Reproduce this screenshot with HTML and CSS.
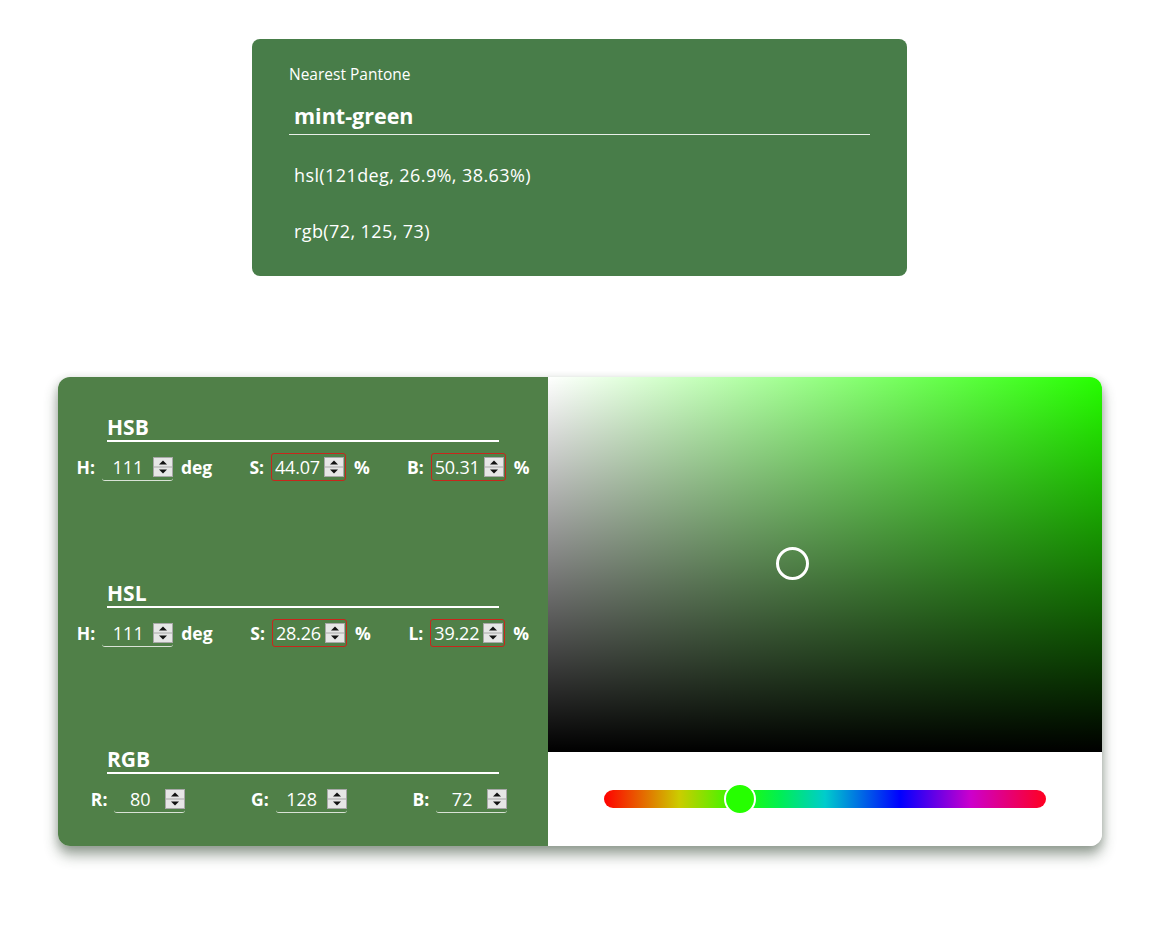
FILE: index.html
```html
<!DOCTYPE html>
<html lang="en">
<head>
<meta charset="utf-8">
<title>Color picker</title>
<link rel="stylesheet" href="styles.css">
</head>
<body>
<main class="page">
  <section class="pantone">
    <div class="pantone-label">Nearest Pantone</div>
    <div class="pantone-name">mint-green</div>
    <p class="pantone-value">hsl(121deg, 26.9%, 38.63%)</p>
    <p class="pantone-value rgbv">rgb(72, 125, 73)</p>
  </section>

  <section class="picker">
    <div class="controls">
      <div class="group">
        <h2 class="group-title">HSB</h2>
        <div class="row">
          <label class="field"><span class="lbl">H:</span><span class="num"><input class="val" type="text" value="111"><span class="spin"><svg viewBox="0 0 20 20" width="20" height="20"><rect x="0.5" y="0.5" width="19" height="19" fill="#e6e6e6" stroke="#a8a8a8"/><line x1="1" y1="10" x2="19" y2="10" stroke="#a8a8a8"/><path d="M6 7.5 L10 3.5 L14 7.5 Z" fill="#111"/><path d="M6 12.5 L10 16.5 L14 12.5 Z" fill="#111"/></svg></span></span><span class="unit">deg</span></label>
          <label class="field"><span class="lbl">S:</span><span class="num bad"><input class="val" type="text" value="44.07"><span class="spin"><svg viewBox="0 0 20 20" width="20" height="20"><rect x="0.5" y="0.5" width="19" height="19" fill="#e6e6e6" stroke="#a8a8a8"/><line x1="1" y1="10" x2="19" y2="10" stroke="#a8a8a8"/><path d="M6 7.5 L10 3.5 L14 7.5 Z" fill="#111"/><path d="M6 12.5 L10 16.5 L14 12.5 Z" fill="#111"/></svg></span></span><span class="unit">%</span></label>
          <label class="field"><span class="lbl">B:</span><span class="num bad"><input class="val" type="text" value="50.31"><span class="spin"><svg viewBox="0 0 20 20" width="20" height="20"><rect x="0.5" y="0.5" width="19" height="19" fill="#e6e6e6" stroke="#a8a8a8"/><line x1="1" y1="10" x2="19" y2="10" stroke="#a8a8a8"/><path d="M6 7.5 L10 3.5 L14 7.5 Z" fill="#111"/><path d="M6 12.5 L10 16.5 L14 12.5 Z" fill="#111"/></svg></span></span><span class="unit">%</span></label>
        </div>
      </div>
      <div class="group">
        <h2 class="group-title">HSL</h2>
        <div class="row">
          <label class="field"><span class="lbl">H:</span><span class="num"><input class="val" type="text" value="111"><span class="spin"><svg viewBox="0 0 20 20" width="20" height="20"><rect x="0.5" y="0.5" width="19" height="19" fill="#e6e6e6" stroke="#a8a8a8"/><line x1="1" y1="10" x2="19" y2="10" stroke="#a8a8a8"/><path d="M6 7.5 L10 3.5 L14 7.5 Z" fill="#111"/><path d="M6 12.5 L10 16.5 L14 12.5 Z" fill="#111"/></svg></span></span><span class="unit">deg</span></label>
          <label class="field"><span class="lbl">S:</span><span class="num bad"><input class="val" type="text" value="28.26"><span class="spin"><svg viewBox="0 0 20 20" width="20" height="20"><rect x="0.5" y="0.5" width="19" height="19" fill="#e6e6e6" stroke="#a8a8a8"/><line x1="1" y1="10" x2="19" y2="10" stroke="#a8a8a8"/><path d="M6 7.5 L10 3.5 L14 7.5 Z" fill="#111"/><path d="M6 12.5 L10 16.5 L14 12.5 Z" fill="#111"/></svg></span></span><span class="unit">%</span></label>
          <label class="field"><span class="lbl">L:</span><span class="num bad"><input class="val" type="text" value="39.22"><span class="spin"><svg viewBox="0 0 20 20" width="20" height="20"><rect x="0.5" y="0.5" width="19" height="19" fill="#e6e6e6" stroke="#a8a8a8"/><line x1="1" y1="10" x2="19" y2="10" stroke="#a8a8a8"/><path d="M6 7.5 L10 3.5 L14 7.5 Z" fill="#111"/><path d="M6 12.5 L10 16.5 L14 12.5 Z" fill="#111"/></svg></span></span><span class="unit">%</span></label>
        </div>
      </div>
      <div class="group">
        <h2 class="group-title">RGB</h2>
        <div class="row row-rgb">
          <label class="field"><span class="lbl">R:</span><span class="num"><input class="val" type="text" value="80"><span class="spin"><svg viewBox="0 0 20 20" width="20" height="20"><rect x="0.5" y="0.5" width="19" height="19" fill="#e6e6e6" stroke="#a8a8a8"/><line x1="1" y1="10" x2="19" y2="10" stroke="#a8a8a8"/><path d="M6 7.5 L10 3.5 L14 7.5 Z" fill="#111"/><path d="M6 12.5 L10 16.5 L14 12.5 Z" fill="#111"/></svg></span></span></label>
          <label class="field"><span class="lbl">G:</span><span class="num"><input class="val" type="text" value="128"><span class="spin"><svg viewBox="0 0 20 20" width="20" height="20"><rect x="0.5" y="0.5" width="19" height="19" fill="#e6e6e6" stroke="#a8a8a8"/><line x1="1" y1="10" x2="19" y2="10" stroke="#a8a8a8"/><path d="M6 7.5 L10 3.5 L14 7.5 Z" fill="#111"/><path d="M6 12.5 L10 16.5 L14 12.5 Z" fill="#111"/></svg></span></span></label>
          <label class="field"><span class="lbl">B:</span><span class="num"><input class="val" type="text" value="72"><span class="spin"><svg viewBox="0 0 20 20" width="20" height="20"><rect x="0.5" y="0.5" width="19" height="19" fill="#e6e6e6" stroke="#a8a8a8"/><line x1="1" y1="10" x2="19" y2="10" stroke="#a8a8a8"/><path d="M6 7.5 L10 3.5 L14 7.5 Z" fill="#111"/><path d="M6 12.5 L10 16.5 L14 12.5 Z" fill="#111"/></svg></span></span></label>
        </div>
      </div>
    </div>
    <div class="visual">
      <div class="sv-area">
        <span class="sv-cursor"></span>
      </div>
      <div class="hue-wrap">
        <div class="hue-bar">
          <span class="hue-thumb"></span>
        </div>
      </div>
    </div>
  </section>
</main>
</body>
</html>
```

FILE: styles.css
```css
* { box-sizing: border-box; }

body {
  margin: 0;
  background: #ffffff;
  font-family: "Open Sans", "Noto Sans", sans-serif;
  color: #ffffff;
}

.page {
  padding-top: 39px;
  padding-bottom: 60px;
}

/* ---------- Pantone card ---------- */
.pantone {
  width: 655px;
  margin: 0 auto 0 252px;
  background: rgb(72, 125, 73);
  border-radius: 8px;
  padding: 25px 37px 33px;
}

.pantone-label {
  font-size: 15.5px;
  line-height: 20px;
  height: 20px;
}

.pantone-name {
  margin-top: 18px;
  padding: 0 0 4px 5px;
  font-size: 21.5px;
  font-weight: 700;
  line-height: 28px;
  border-bottom: 1px solid #e8efe8;
}

.pantone-value {
  margin: 28px 0 0 5px;
  font-size: 18px;
  letter-spacing: 0.4px;
  line-height: 24px;
}

.pantone-value.rgbv {
  margin-top: 32px;
}

/* ---------- Picker ---------- */
.picker {
  width: 1044px;
  height: 469px;
  margin: 101px 0 0 58px;
  display: flex;
  border-radius: 12px;
  overflow: hidden;
  box-shadow: 0 9px 14px rgba(40, 60, 40, 0.45), 0 2px 8px rgba(40, 60, 40, 0.18);
}

.controls {
  width: 490px;
  flex: none;
  background: rgb(80, 128, 72);
  padding-top: 37px;
}

.group {
  height: 166px;
}

.group-title {
  margin: 0 49px;
  font-size: 21px;
  font-weight: 700;
  line-height: 26px;
  border-bottom: 2px solid #ffffff;
}

.row {
  margin-top: 11px;
  height: 28px;
  display: flex;
  justify-content: space-around;
  align-items: center;
}

.row-rgb {
  padding-right: 8px;
}

.field {
  display: flex;
  align-items: center;
  font-size: 17.5px;
  font-weight: 700;
}

.lbl {
  margin-right: 7px;
}

.num {
  display: flex;
  align-items: center;
  height: 28px;
  padding: 0 0 0 1px;
  border-bottom: 1px solid #d9e2d6;
  border-radius: 0 0 3px 3px;
}

.num.bad {
  border: 1px solid #c8261c;
  border-radius: 3px;
  padding: 0 1px 0 3px;
}

.val {
  width: 50px;
  border: none;
  background: transparent;
  color: #ffffff;
  font-family: "Open Sans", "Noto Sans", sans-serif;
  font-size: 18px;
  font-weight: 400;
  text-align: center;
  padding: 0;
  outline: none;
}

.num.bad .val {
  width: 49px;
  text-align: left;
  letter-spacing: -0.2px;
}

.spin {
  display: block;
  width: 20px;
  height: 20px;
}

.spin svg {
  display: block;
}

.unit {
  margin-left: 8px;
}

/* ---------- Visual side ---------- */
.visual {
  flex: 1;
  display: flex;
  flex-direction: column;
  background: #ffffff;
}

.sv-area {
  position: relative;
  height: 375px;
  background:
    linear-gradient(to top, #000000, rgba(0, 0, 0, 0)),
    linear-gradient(to right, #ffffff, #26ff00);
}

.sv-cursor {
  position: absolute;
  left: 228px;
  top: 170px;
  width: 33px;
  height: 33px;
  border: 3px solid #ffffff;
  border-radius: 50%;
}

.hue-wrap {
  flex: 1;
  display: flex;
  align-items: center;
  padding: 0 56px;
}

.hue-bar {
  position: relative;
  width: 100%;
  height: 18px;
  border-radius: 9px;
  background: linear-gradient(to right,
    #ff0000 0%, #cccc00 17%, #22ff00 31%, #00ee55 40%, #00cccc 50%,
    #0000ff 67%, #cc00cc 83%, #ff0020 100%);
}

.hue-thumb {
  position: absolute;
  left: 120px;
  top: -7px;
  width: 32px;
  height: 32px;
  border-radius: 50%;
  background: #26ff00;
  border: 2px solid #ffffff;
}
```
